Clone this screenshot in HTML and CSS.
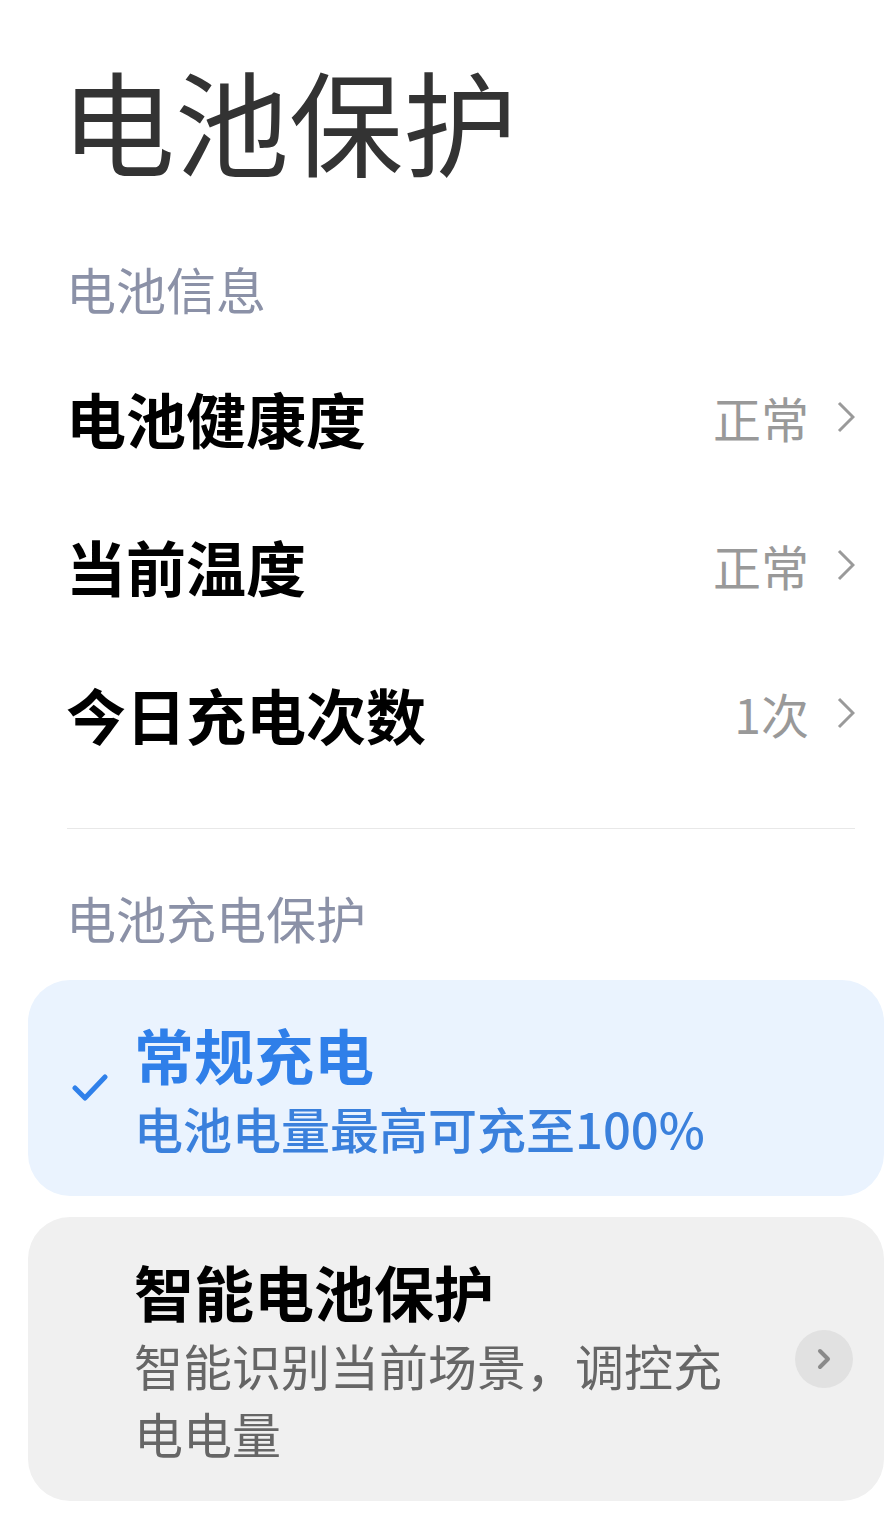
FILE: index.html
```html
<!DOCTYPE html>
<html lang="zh-CN">

<head>
    <meta charset="UTF-8">
    <title>电池保护</title>
    <link rel="stylesheet" href="styles.css">
</head>

<body>
    <div class="page">
        <h1 class="title">电池保护</h1>

        <div class="section">电池信息</div>
        <ul class="list">
            <li class="row">
                <span class="row_name">电池健康度</span>
                <span class="row_value">正常
                    <svg class="arrow" width="18" height="32" viewBox="0 0 18 32">
                        <polyline points="2,2 16,16 2,30" />
                    </svg>
                </span>
            </li>
            <li class="row">
                <span class="row_name">当前温度</span>
                <span class="row_value">正常
                    <svg class="arrow" width="18" height="32" viewBox="0 0 18 32">
                        <polyline points="2,2 16,16 2,30" />
                    </svg>
                </span>
            </li>
            <li class="row">
                <span class="row_name">今日充电次数</span>
                <span class="row_value">1次
                    <svg class="arrow" width="18" height="32" viewBox="0 0 18 32">
                        <polyline points="2,2 16,16 2,30" />
                    </svg>
                </span>
            </li>
        </ul>
        <div class="line"></div>

        <div class="section section_charge">电池充电保护</div>
        <div class="card card_active">
            <svg class="check" width="36" height="28" viewBox="0 0 36 28">
                <polyline points="3,14 13,24 33,3" />
            </svg>
            <div class="card_text">
                <div class="card_title">常规充电</div>
                <div class="card_desc">电池电量最高可充至100%</div>
            </div>
        </div>
        <div class="card">
            <div class="check_space"></div>
            <div class="card_text">
                <div class="card_title">智能电池保护</div>
                <div class="card_desc">智能识别当前场景，调控充电电量</div>
            </div>
            <a href="javascript:;" class="more">
                <svg width="16" height="24" viewBox="0 0 16 24">
                    <polyline points="4,4 12,12 4,20" />
                </svg>
            </a>
        </div>
    </div>
</body>

</html>
```

FILE: styles.css
```css
* {
    padding: 0;
    margin: 0;
    list-style: none;
}

body {
    background-color: #fff;
    font-family: "Noto Sans CJK SC", "Noto Sans", sans-serif;
}

.page {
    width: 887px;
    padding-top: 52px;
}

.title {
    margin-left: 61px;
    font-size: 114px;
    line-height: 134px;
    font-weight: 400;
    color: #333;
}

.section {
    margin: 67px 0 0 66px;
    font-size: 50px;
    line-height: 70px;
    color: #8b91a7;
}

.list {
    margin: 20px 32px 0 66px;
}

.row {
    height: 148px;
    display: flex;
    justify-content: space-between;
    align-items: center;
}

.row_name {
    font-size: 60px;
    font-weight: 700;
    color: #000;
}

.row_value {
    display: flex;
    align-items: center;
    font-size: 48px;
    color: #999;
}

.arrow {
    margin-left: 28px;
}

.arrow polyline {
    fill: none;
    stroke: #9a9a9a;
    stroke-width: 3;
}

.line {
    height: 1px;
    margin: 41px 32px 0 67px;
    background-color: #e8e8e8;
}

.section_charge {
    margin-top: 53px;
}

.card {
    margin: 28px 3px 0 28px;
    padding: 34px 31px 34px 44px;
    border-radius: 42px;
    background-color: #f0f0f0;
    display: flex;
    align-items: center;
}

.card + .card {
    margin-top: 21px;
}

.card_active {
    background-color: #eaf3fe;
}

.check,
.check_space {
    width: 36px;
    flex-shrink: 0;
    margin-right: 26px;
}

.check polyline {
    fill: none;
    stroke: #2f80ea;
    stroke-width: 5;
    stroke-linecap: round;
    stroke-linejoin: round;
}

.card_text {
    flex: 1;
    margin-right: 40px;
}

.card_title {
    font-size: 60px;
    line-height: 80px;
    font-weight: 700;
    color: #000;
}

.card_desc {
    font-size: 49px;
    line-height: 68px;
    color: #666;
}

.card_active .card_title {
    color: #2f7fe9;
}

.card_active .card_desc {
    font-weight: 500;
    color: #3a80dc;
}

.more {
    width: 58px;
    height: 58px;
    flex-shrink: 0;
    border-radius: 50%;
    background-color: #e1e1e1;
    display: flex;
    justify-content: center;
    align-items: center;
}

.more polyline {
    fill: none;
    stroke: #8a8a8a;
    stroke-width: 4;
    stroke-linecap: round;
    stroke-linejoin: round;
}
```
